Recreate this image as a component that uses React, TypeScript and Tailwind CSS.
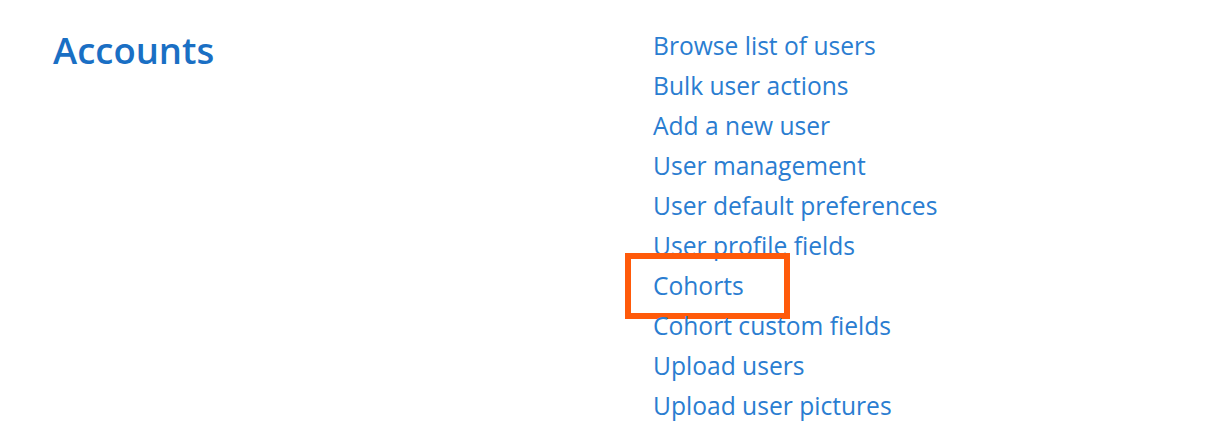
const links = [
  "Browse list of users",
  "Bulk user actions",
  "Add a new user",
  "User management",
  "User default preferences",
  "User profile fields",
  "Cohorts",
  "Cohort custom fields",
  "Upload users",
  "Upload user pictures",
];

export default function App() {
  return (
    <div
      className="w-[1207px] h-[440px] bg-white flex pt-[26px]"
      style={{ fontFamily: '"Open Sans", "Noto Sans", sans-serif' }}
    >
      <div className="w-[600px] pl-[53px]">
        <h2 className="text-[36.5px] leading-[48px] font-semibold text-[#1a6fc4]">Accounts</h2>
      </div>
      <ul className="flex flex-col pl-[53px]">
        {links.map((label) => (
          <li key={label} className="relative h-[40px] leading-[40px]">
            {label === "Cohorts" && (
              <span className="absolute left-[-28px] top-[-13px] w-[165px] h-[66px] border-[6px] border-[#ff5a0a]" />
            )}
            <a href="#" className="relative text-[24.6px] text-[#2a7dd1]">
              {label}
            </a>
          </li>
        ))}
      </ul>
    </div>
  );
}
